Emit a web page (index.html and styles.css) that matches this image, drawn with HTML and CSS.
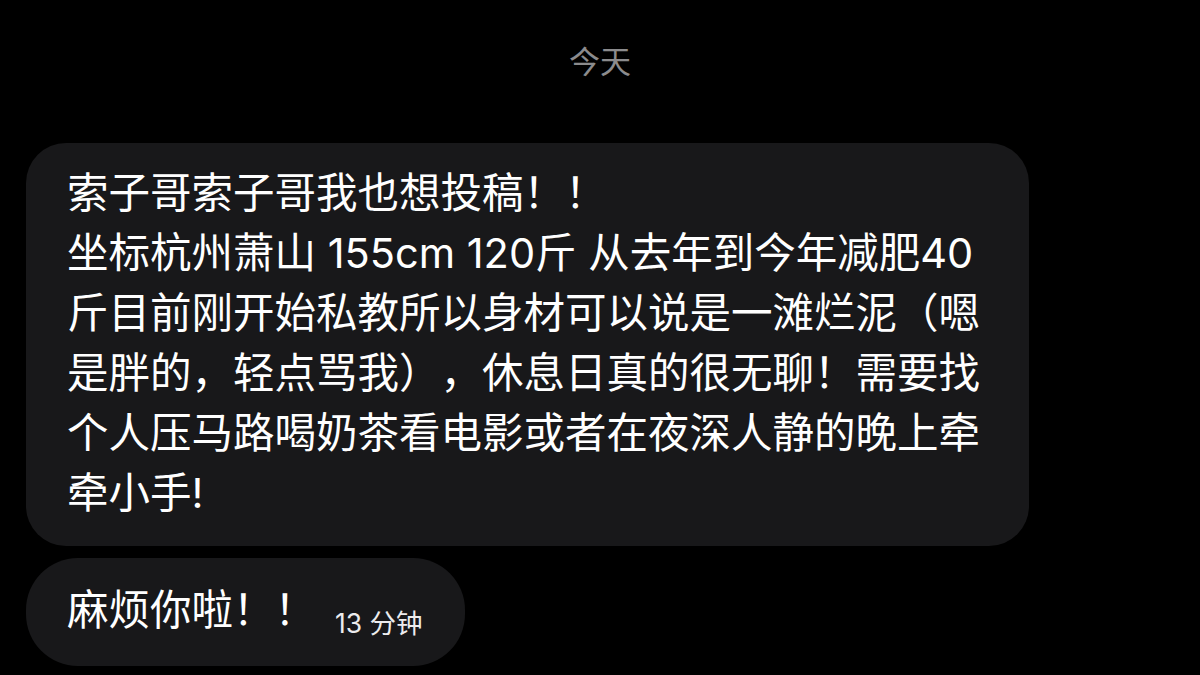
FILE: index.html
```html
<!DOCTYPE html>
<html lang="zh-CN">

<head>
  <meta charset="UTF-8">
  <meta name="viewport" content="width=device-width, initial-scale=1.0">
  <title>今天</title>
  <link rel="stylesheet" href="styles.css">
</head>

<body>
  <div class="chat">
    <div class="day-label">今天</div>

    <div class="bubble bubble-long">
      <div class="line">索子哥索子哥我也想投稿！！</div>
      <div class="line">坐标杭州萧山 155cm 120斤 从去年到今年减肥40</div>
      <div class="line">斤目前刚开始私教所以身材可以说是一滩烂泥（嗯</div>
      <div class="line">是胖的，轻点骂我），休息日真的很无聊！需要找</div>
      <div class="line">个人压马路喝奶茶看电影或者在夜深人静的晚上牵</div>
      <div class="line">牵小手!</div>
    </div>

    <div class="bubble bubble-short">
      <span class="line">麻烦你啦！！</span>
      <span class="time">13 分钟</span>
    </div>
  </div>
</body>

</html>
```

FILE: styles.css
```css
body {
  margin: 0;
  padding: 0;
  background: #000;
  color: #fff;
  font-family: "Inter", "Noto Sans CJK SC", sans-serif;
}

.chat {
  display: flex;
  flex-direction: column;
  align-items: flex-start;
  padding: 42px 26px 0;
  height: 633px;
  overflow: hidden;
}

.day-label {
  align-self: center;
  font-size: 31px;
  line-height: 40px;
  color: #8b8b8d;
  margin-bottom: 61px;
}

.bubble {
  background: #18181a;
  font-size: 41.5px;
  line-height: 60px;
  text-spacing-trim: space-all;
}

.line {
  white-space: nowrap;
}

.bubble-long {
  border-radius: 40px;
  padding: 20px 40px 23px 41px;
  width: 922px;
}

.bubble-short {
  margin-top: 12px;
  border-radius: 52px;
  padding: 22px 42px 26px 41px;
  display: flex;
  align-items: flex-end;
  gap: 19px;
}

.time {
  font-size: 26.5px;
  line-height: 30px;
  color: #ececee;
  margin-bottom: 2px;
}
```
